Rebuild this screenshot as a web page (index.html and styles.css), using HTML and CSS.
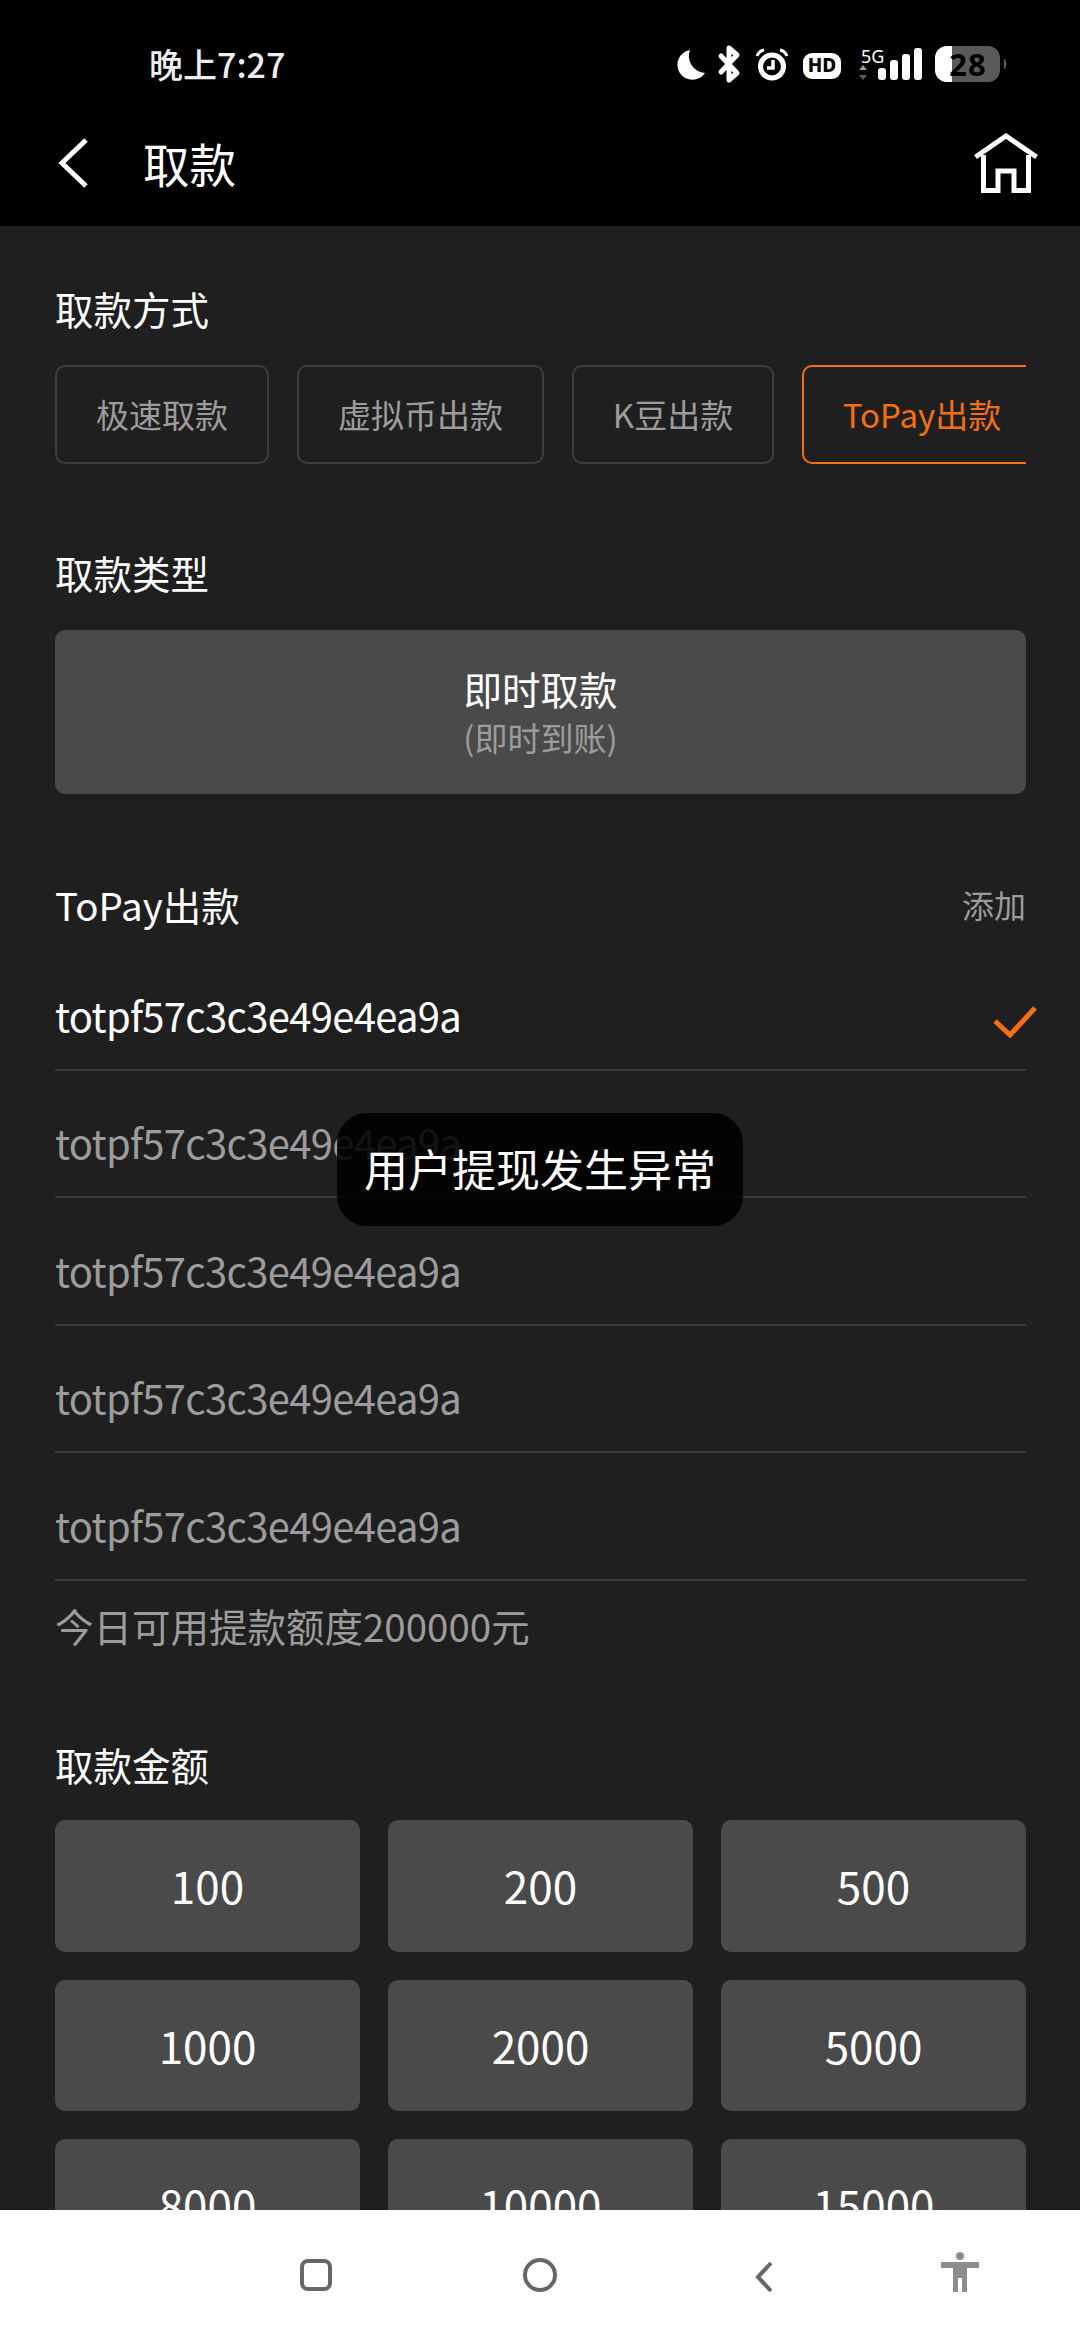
FILE: index.html
```html
<!DOCTYPE html>
<html lang="zh-CN">
 <head>
  <meta charset="utf-8">
  <title>取款</title>
  <link rel="stylesheet" href="styles.css">
 </head>
 <body>
  <div class="screen">
   <header class="top">
    <div class="status">
     <span class="time">晚上7:27</span>
     <svg class="status-icons" width="340" height="40" viewBox="670 44 340 40">
      <!-- moon -->
      <path d="M690 50a15 15 0 1 0 15 23a17 17 0 0 1-15-23z" fill="#fff"/>
      <!-- bluetooth -->
      <path d="M721 56l16 17l-8 7v-32l8 7l-16 17" fill="none" stroke="#fff" stroke-width="5" stroke-linecap="round" stroke-linejoin="round"/>
      <!-- alarm -->
      <circle cx="772" cy="66.500" r="11.500" fill="none" stroke="#fff" stroke-width="5"/>
      <path d="M773 60v8h-6" fill="none" stroke="#fff" stroke-width="3.500"/>
      <path d="M757 56q2-5 7-6M787 56q-2-5-7-6" fill="none" stroke="#fff" stroke-width="3"/>
      <!-- hd -->
      <rect x="803" y="53" width="38" height="26" rx="9" fill="#fff"/>
      <text x="822" y="72" class="hd">HD</text>
      <!-- 5G + data arrows -->
      <text x="861" y="63" class="five-g">5G</text>
      <path d="M863 65l4 5h-8z" fill="#9a9a9a"/>
      <path d="M863 80l4-5h-8z" fill="#5c5c5c"/>
      <!-- signal bars -->
      <rect x="878" y="68" width="8" height="12" rx="3" fill="#fff"/>
      <rect x="890" y="60" width="8" height="20" rx="3" fill="#fff"/>
      <rect x="902" y="54" width="8" height="26" rx="3" fill="#fff"/>
      <rect x="914" y="48" width="8" height="32" rx="3" fill="#fff"/>
      <!-- battery -->
      <rect x="935" y="46" width="65" height="36" rx="12" fill="#5a5a5a"/>
      <path d="M952 46h-5a12 12 0 0 0-12 12v12a12 12 0 0 0 12 12h5z" fill="#fff"/>
      <path d="M1004 58q5 6 0 12z" fill="#5a5a5a"/>
      <text x="968" y="75.500" class="batt">28</text>
     </svg>
    </div>
    <div class="bar">
     <svg class="back" width="30" height="50" viewBox="0 0 30 50"><path d="M28 2L4 25l24 23" fill="none" stroke="#fff" stroke-width="5"/></svg>
     <h1 class="bar-title">取款</h1>
     <svg class="home" width="66" height="60" viewBox="0 0 66 60"><path d="M2.500 24L33 3l30.500 21M10.500 22v35.500H25V38h16v19.500h14.500V22" fill="none" stroke="#fff" stroke-width="5"/></svg>
    </div>
   </header>

   <main class="page">
    <h2 class="label first">取款方式</h2>
    <div class="tabs">
     <div class="tab t1">极速取款</div>
     <div class="tab t2">虚拟币出款</div>
     <div class="tab t3">K豆出款</div>
     <div class="tab t4 on">ToPay出款</div>
    </div>

    <h2 class="label second">取款类型</h2>
    <div class="kind">
     <div class="kind-name">即时取款</div>
     <div class="kind-sub">(即时到账)</div>
    </div>

    <div class="acc-head">
     <span class="acc-title">ToPay出款</span>
     <span class="add">添加</span>
    </div>
    <ul class="accounts">
     <li class="acc sel"><span>totpf57c3c3e49e4ea9a</span>
      <svg class="tick" width="44" height="32" viewBox="0 0 44 32"><path d="M2 15l15 14L42 2" fill="none" stroke="#f36f16" stroke-width="5"/></svg>
     </li>
     <li class="acc"><span>totpf57c3c3e49e4ea9a</span></li>
     <li class="acc"><span>totpf57c3c3e49e4ea9a</span></li>
     <li class="acc"><span>totpf57c3c3e49e4ea9a</span></li>
     <li class="acc"><span>totpf57c3c3e49e4ea9a</span></li>
    </ul>
    <p class="limit">今日可用提款额度200000元</p>

    <h2 class="label third">取款金额</h2>
    <div class="amounts">
     <div class="amt">100</div>
     <div class="amt">200</div>
     <div class="amt">500</div>
     <div class="amt">1000</div>
     <div class="amt">2000</div>
     <div class="amt">5000</div>
     <div class="amt">8000</div>
     <div class="amt">10000</div>
     <div class="amt">15000</div>
    </div>
   </main>

   <footer class="sysnav">
    <svg class="nav-square" width="32" height="32" viewBox="0 0 32 32"><rect x="2" y="2" width="28" height="28" rx="6" fill="none" stroke="#666" stroke-width="4"/></svg>
    <svg class="nav-circle" width="34" height="34" viewBox="0 0 34 34"><circle cx="17" cy="17" r="15" fill="none" stroke="#666" stroke-width="4"/></svg>
    <svg class="nav-back" width="18" height="32" viewBox="0 0 18 32"><path d="M16 2L3 16l13 14" fill="none" stroke="#666" stroke-width="4"/></svg>
    <svg class="nav-person" width="38" height="40" viewBox="0 0 38 40"><circle cx="19" cy="4" r="4" fill="#8c8c8c"/><path d="M0 10h38v6H26v24h-5V26h-4v14h-5V16H0z" fill="#8c8c8c"/></svg>
   </footer>

   <div class="toast">用户提现发生异常</div>
  </div>
 </body>
</html>
```

FILE: styles.css
```css
* { box-sizing: border-box; }
html, body { margin: 0; padding: 0; background: #1f1f1f; }
body { font-family: "Noto Sans CJK SC", "Noto Sans", sans-serif; color: #fff; }
h1, h2, p, ul { margin: 0; padding: 0; font-weight: 400; }
ul { list-style: none; }

.screen
{
 position: relative;
 width: 1080px;
 height: 2340px;
 display: flex;
 flex-direction: column;
 overflow: hidden;
}

/* status + title bar, 226px total */
.top { height: 226px; flex: none; background: #000; }
.status
{
 height: 110px;
 display: flex;
 align-items: flex-start;
 padding: 44px 70px 0 149px;
 justify-content: space-between;
}
.time { font-size: 34px; line-height: 40px; font-weight: 500; color: #eee; }
.status-icons { display: block; }
.status-icons text { font-family: "Noto Sans", sans-serif; }
.hd { font-size: 19px; font-weight: 800; fill: #000; text-anchor: middle; }
.five-g { font-size: 18px; fill: #fff; }
.batt { font-size: 31px; font-weight: 700; fill: #000; text-anchor: middle; letter-spacing: 1px; }

.bar { height: 116px; display: flex; align-items: center; padding: 0 41px 10px 58px; }
.back { flex: none; }
.bar-title { font-size: 46.5px; line-height: 60px; margin-left: 55px; flex: 1; }
.home { flex: none; }

/* scrolled content, cut off by the system bar */
.page { flex: 1; min-height: 0; overflow: hidden; padding: 0 54px 0 55px; }
.label { font-size: 38.5px; line-height: 56px; }
.label.first { margin-top: 54px; }
.label.second { margin-top: 80px; }
.label.third { margin-top: 83px; }

.tabs { display: flex; gap: 28px; margin-top: 29px; height: 99px; overflow: hidden; }
.tab
{
 flex: none;
 height: 99px;
 border: 2px solid #3e3e3e;
 border-radius: 10px;
 font-size: 33px;
 line-height: 95px;
 text-align: center;
 color: #9c9c9c;
}
.t1 { width: 214px; }
.t2 { width: 247px; }
.t3 { width: 202px; }
.t4 { width: 240px; }
.tab.on { border-color: #f36f16; color: #f36f16; }

.kind
{
 margin-top: 30px;
 height: 164px;
 background: #4a4a4a;
 border-radius: 10px;
 text-align: center;
 padding-top: 32px;
}
.kind-name { font-size: 38.5px; line-height: 52px; }
.kind-sub { font-size: 33px; line-height: 47px; color: #9c9c9c; }

.acc-head
{
 margin-top: 82px;
 height: 56px;
 display: flex;
 justify-content: space-between;
 align-items: center;
}
.acc-title { font-size: 38.5px; }
.add { font-size: 32px; color: #9c9c9c; }

.accounts { margin-top: 11px; }
.acc
{
 height: 127.5px;
 display: flex;
 justify-content: space-between;
 align-items: flex-end;
 padding-bottom: 26px;
 border-bottom: 2px solid #3a3a3a;
 font-size: 40px;
 letter-spacing: -0.7px;
 line-height: 56px;
 color: #9c9c9c;
}
.acc.sel { color: #fff; }
.tick { margin-right: -11px; margin-bottom: 5px; }

.limit { margin-top: 16px; font-size: 38.5px; line-height: 56px; color: #9c9c9c; }

.amounts
{
 margin-top: 28.5px;
 display: grid;
 grid-template-columns: repeat(3, 1fr);
 gap: 28px;
}
.amt
{
 height: 131.5px;
 background: #4a4a4a;
 border-radius: 10px;
 font-size: 44px;
 line-height: 131px;
 text-align: center;
}

/* system navigation */
.sysnav { position: relative; height: 130px; flex: none; background: #fff; }
.sysnav svg { position: absolute; }
.nav-square { left: 300px; top: 49px; }
.nav-circle { left: 523px; top: 48px; }
.nav-back { left: 755px; top: 51px; }
.nav-person { left: 941px; top: 42px; }

.toast
{
 position: absolute;
 left: 337px;
 top: 1113px;
 width: 406px;
 height: 113px;
 border-radius: 30px;
 background: rgba(0, 0, 0, 0.88);
 font-size: 44px;
 line-height: 110px;
 text-align: center;
}
```
